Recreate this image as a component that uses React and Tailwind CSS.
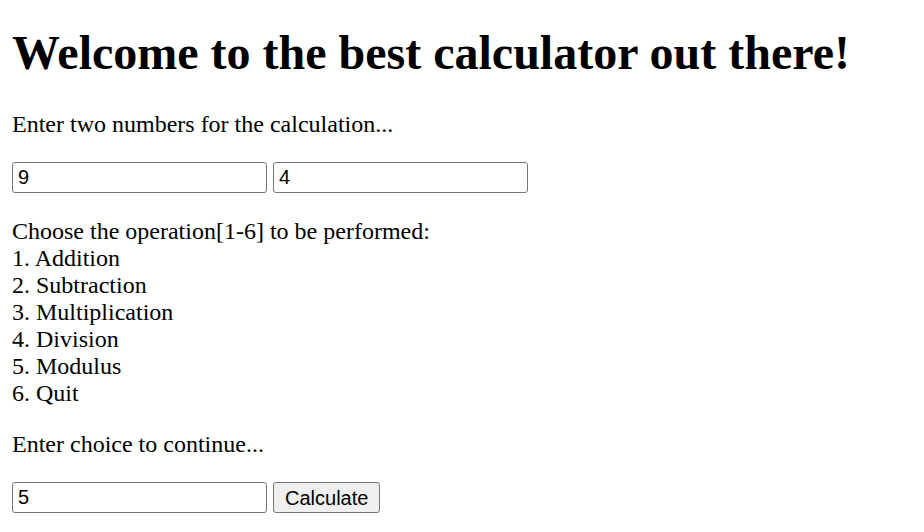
import React, { useState } from 'react';

export default function App() {
    const [first, setFirst] = useState('9');
    const [second, setSecond] = useState('4');
    const [choice, setChoice] = useState('5');

    const serif = "font-['Liberation_Serif','Times_New_Roman',serif]";
    const inputCls = "w-[255px] h-[31px] border border-[#767676] rounded-[3px] px-[5px] text-[20px] text-black bg-white font-['Liberation_Sans',Arial,sans-serif] outline-none";

    const operations = ['Addition', 'Subtraction', 'Multiplication', 'Division', 'Modulus', 'Quit'];

    return (
        <div className={`min-h-screen bg-white text-black px-[12px] pt-[26px] ${serif}`}>
            <h1 className="text-[48px] font-bold leading-[53px]">Welcome to the best calculator out there!</h1>

            <p className="mt-[32px] text-[24px] leading-[27px]">Enter two numbers for the calculation...</p>

            <div className="mt-[24px] flex gap-[6px]">
                <input className={inputCls} value={first} onChange={(e) => setFirst(e.target.value)} />
                <input className={inputCls} value={second} onChange={(e) => setSecond(e.target.value)} />
            </div>

            <div className="mt-[25px] text-[24px] leading-[27px]">
                <div>Choose the operation[1-6] to be performed:</div>
                {operations.map((op, i) => (
                    <div key={op}>{i + 1}. {op}</div>
                ))}
            </div>

            <p className="mt-[24px] text-[24px] leading-[27px]">Enter choice to continue...</p>

            <div className="mt-[24px] flex gap-[6px]">
                <input className={inputCls} value={choice} onChange={(e) => setChoice(e.target.value)} />
                <button className="h-[31px] px-[11px] border border-[#767676] rounded-[3px] bg-[#efefef] text-[20px] text-black font-['Liberation_Sans',Arial,sans-serif]">
                    Calculate
                </button>
            </div>
        </div>
    );
}
